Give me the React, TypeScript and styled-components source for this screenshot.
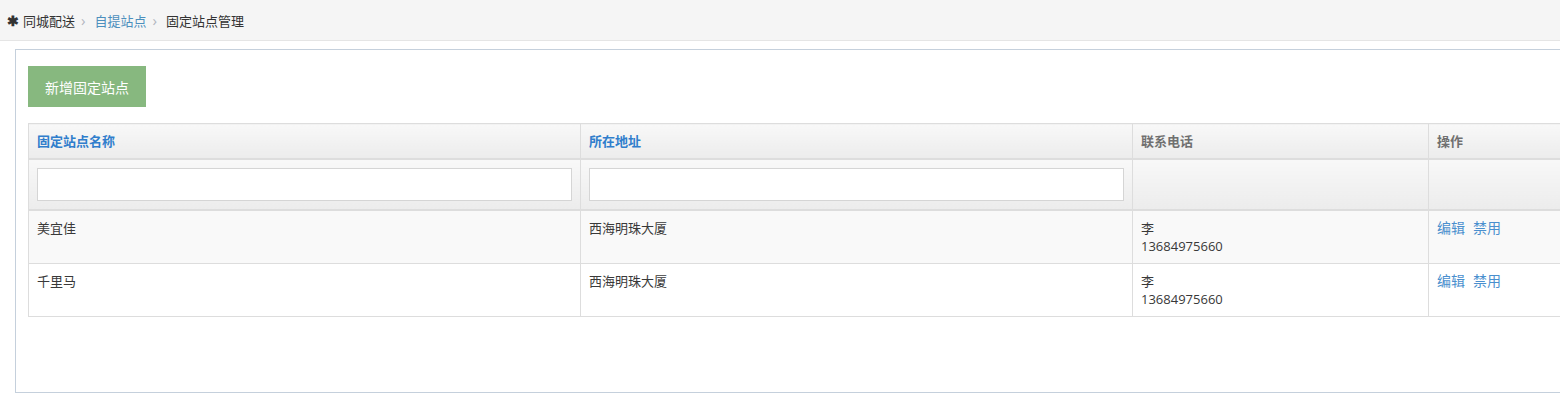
import styled, { createGlobalStyle } from "styled-components"

const GlobalStyle = createGlobalStyle`
  html, body {
    margin: 0;
    padding: 0;
    background: #fff;
    overflow: hidden;
  }
  body {
    font-family: "Open Sans", "Noto Sans CJK SC", sans-serif;
    font-size: 13px;
    color: #393939;
  }
`

const stations = [
  { name: "美宜佳", address: "西海明珠大厦", contact: "李", phone: "13684975660" },
  { name: "千里马", address: "西海明珠大厦", contact: "李", phone: "13684975660" },
]

const App = (): JSX.Element => {
  return (
    <Page>
      <GlobalStyle />

      <Breadcrumbs>
        <span className="home">✱</span>
        <span>同城配送</span>
        <span className="sep">›</span>
        <a href="#">自提站点</a>
        <span className="sep">›</span>
        <span>固定站点管理</span>
      </Breadcrumbs>

      <Panel>
        <AddButton>新增固定站点</AddButton>

        <Table>
          <colgroup>
            <col style={{ width: 552 }} />
            <col style={{ width: 552 }} />
            <col style={{ width: 296 }} />
            <col />
          </colgroup>
          <thead>
            <tr>
              <HeadCell $link>固定站点名称</HeadCell>
              <HeadCell $link>所在地址</HeadCell>
              <HeadCell>联系电话</HeadCell>
              <HeadCell>操作</HeadCell>
            </tr>
            <FilterRow>
              <td><FilterInput /></td>
              <td><FilterInput /></td>
              <td />
              <td />
            </FilterRow>
          </thead>
          <tbody>
            {stations.map((s, i) => (
              <BodyRow key={i} $odd={i % 2 === 0}>
                <td>{s.name}</td>
                <td>{s.address}</td>
                <td>
                  <div>{s.contact}</div>
                  <div>{s.phone}</div>
                </td>
                <td>
                  <Action href="#">编辑</Action>
                  <Action href="#">禁用</Action>
                </td>
              </BodyRow>
            ))}
          </tbody>
        </Table>
      </Panel>
    </Page>
  )
}

export default App

const Page = styled.div`
  width: 1640px;
`

const Breadcrumbs = styled.div`
  height: 40px;
  background: #f5f5f5;
  border-bottom: 1px solid #e5e5e5;
  display: flex;
  align-items: center;
  padding-left: 7px;
  color: #333;
  font-size: 13px;

  .home {
    font-size: 14px;
    font-weight: bold;
    color: #333;
    margin-right: 4px;
  }

  .sep {
    color: #b2b6bf;
    font-size: 15px;
    margin: 0 9px 0 6px;
  }

  a {
    color: #4c8fbd;
    text-decoration: none;
  }
`

const Panel = styled.div`
  margin: 8px 0 0 15px;
  border: 1px solid #c5d0dc;
  height: 344px;
  box-sizing: border-box;
  padding: 16px 12px;
`

const AddButton = styled.button`
  display: block;
  height: 41px;
  padding: 0 17px;
  border: 0;
  background: #87b87f;
  color: #fff;
  font-family: "Open Sans", "Noto Sans CJK SC", sans-serif;
  font-size: 14px;
  font-weight: normal;
  cursor: pointer;
`

const Table = styled.table`
  margin-top: 16px;
  width: 1580px;
  border-collapse: collapse;
  table-layout: fixed;

  td, th {
    border: 1px solid #ddd;
    text-align: left;
    vertical-align: top;
  }
`

const HeadCell = styled.th<{ $link?: boolean }>`
  height: 35px;
  box-sizing: border-box;
  padding: 0 8px;
  vertical-align: middle !important;
  background: linear-gradient(to bottom, #f8f8f8 0%, #ececec 100%);
  color: ${(p) => (p.$link ? "#307ecc" : "#707070")};
  font-weight: bold;
  font-size: 13px;
  border-bottom: 2px solid #ddd !important;
`

const FilterRow = styled.tr`
  td {
    height: 50px;
    box-sizing: border-box;
    padding: 8px;
    background: linear-gradient(to bottom, #f8f8f8 0%, #ececec 100%);
    border-bottom: 2px solid #ddd;
  }
`

const FilterInput = styled.input`
  display: block;
  width: 100%;
  height: 33px;
  box-sizing: border-box;
  border: 1px solid #d5d5d5;
  background: #fff;
  outline: none;
`

const BodyRow = styled.tr<{ $odd: boolean }>`
  background: ${(p) => (p.$odd ? "#f9f9f9" : "#fff")};

  td {
    padding: 8px;
    line-height: 18px;
    height: 52px;
    box-sizing: border-box;
    color: #393939;
  }
`

const Action = styled.a`
  color: #4a8fce;
  font-size: 14px;
  text-decoration: none;
  margin-right: 8px;
`
